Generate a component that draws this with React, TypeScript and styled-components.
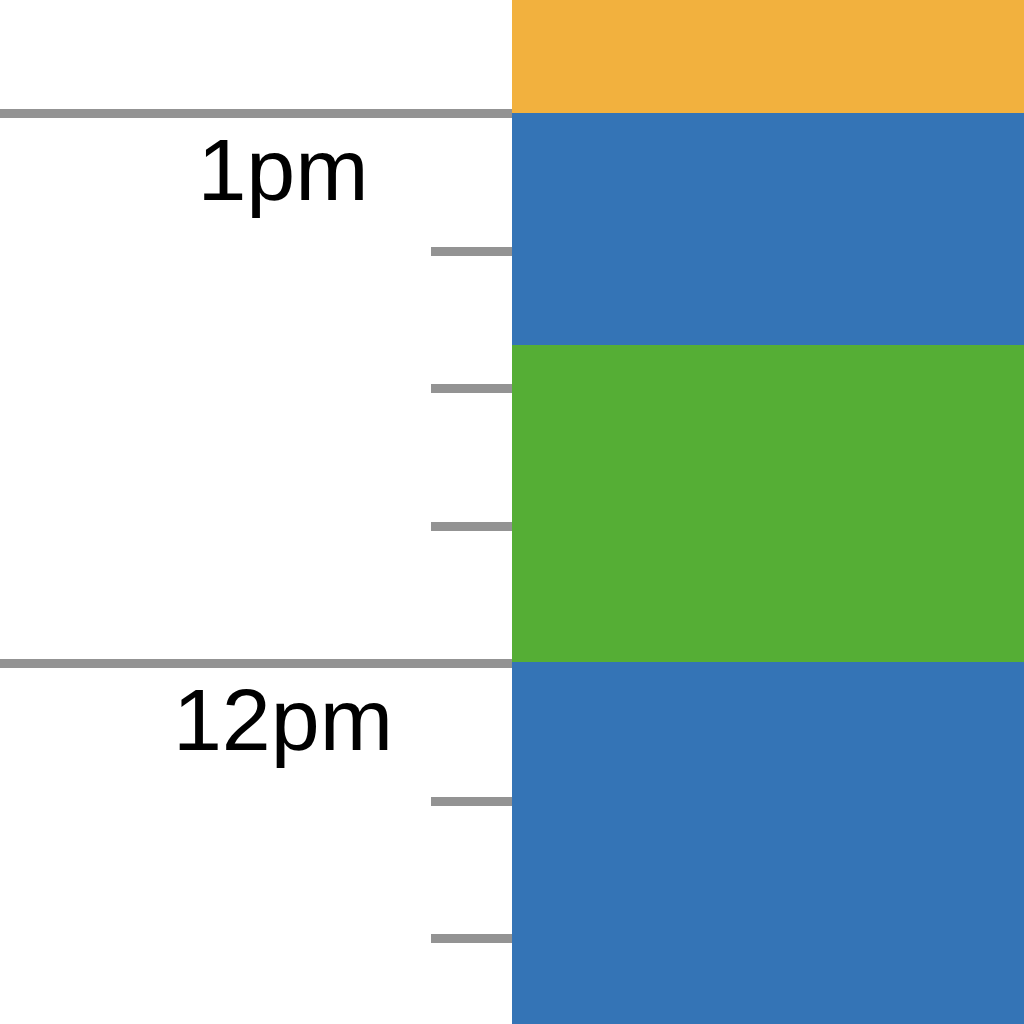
import styled, { createGlobalStyle } from "styled-components"

const QUARTER = 137.5

const hours = [
    { label: "1pm" },
    { label: "12pm" },
]

const events = [
    { color: "#f2b13e", height: 113 },
    { color: "#3474b6", height: 232 },
    { color: "#55ae35", height: 317 },
    { color: "#3474b6", height: 0 },
]

const GlobalStyle = createGlobalStyle`
  html, body {
    margin: 0;
    padding: 0;
    background: #ffffff;
  }
`

export default function App() {
    return (
        <>
            <GlobalStyle />
            <Page>
                <Axis>
                    {hours.map((hour) => (
                        <HourBlock key={hour.label}>
                            {[0, 1, 2, 3].map((q) => (
                                <Quarter key={q}>
                                    <Mark $hour={q === 0} />
                                    {q === 0 && <HourLabel>{hour.label}</HourLabel>}
                                </Quarter>
                            ))}
                        </HourBlock>
                    ))}
                </Axis>
                <Track>
                    {events.map((ev, index) => (
                        <EventBlock key={index} $color={ev.color} $height={ev.height} />
                    ))}
                </Track>
            </Page>
        </>
    )
}

const Page = styled.div`
display: flex;
width: 1024px;
height: 1024px;
overflow: hidden;
background: #ffffff;
`

const Axis = styled.div`
width: 512px;
flex: none;
display: flex;
flex-direction: column;
padding-top: 109px;
box-sizing: border-box;
`

const HourBlock = styled.div`
display: flex;
flex-direction: column;
`

const Quarter = styled.div`
height: ${QUARTER}px;
flex: none;
display: flex;
flex-direction: column;
`

const Mark = styled.div<{ $hour: boolean }>`
height: 9px;
width: ${(p) => (p.$hour ? "100%" : "81px")};
align-self: flex-end;
background: #939393;
flex: none;
`

const HourLabel = styled.div`
margin-top: 7.5px;
padding-left: 54px;
text-align: center;
font-family: "Liberation Sans", Arial, sans-serif;
font-size: 88px;
line-height: 88px;
color: #000000;
`

const Track = styled.div`
flex: 1;
display: flex;
flex-direction: column;
`

const EventBlock = styled.div<{ $color: string; $height: number }>`
background: ${(p) => p.$color};
${(p) => (p.$height ? `height: ${p.$height}px; flex: none;` : "flex: 1;")}
`
